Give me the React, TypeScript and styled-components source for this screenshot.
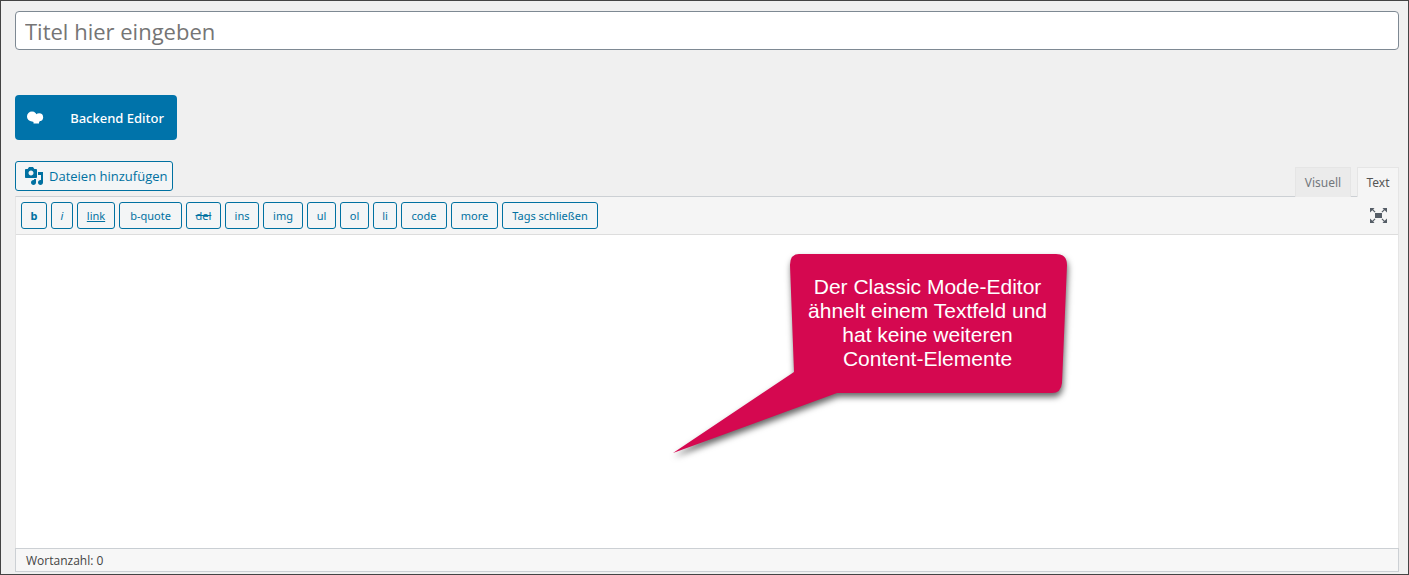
import React from 'react';
import styled, { createGlobalStyle, css } from 'styled-components';

const blue = '#0071a1';

const GlobalStyle = createGlobalStyle`
  *, *::before, *::after { box-sizing: border-box; }
  body {
    margin: 0;
    background: #f0f0f0;
    color: #444;
    font-family: 'Open Sans', 'Noto Sans', sans-serif;
  }
  button, input, textarea { font-family: inherit; margin: 0; }
`;

const Page = styled.main`
  display: flex;
  flex-direction: column;
  min-height: 100vh;
  padding: 10px 9px 2px 14px;
  border: 1px solid #444;
  background: #f0f0f0;
`;

const TitleInput = styled.input`
  width: 100%;
  height: 39px;
  padding: 0 9px;
  border: 1px solid #7e8993;
  border-radius: 4px;
  background: #fff;
  color: #32373c;
  font-size: 22px;
  &::placeholder { color: #757575; opacity: 1; }
`;

const BackendButton = styled.button`
  display: flex;
  align-items: center;
  align-self: flex-start;
  justify-content: space-between;
  width: 162px;
  height: 45px;
  margin-top: 45px;
  padding: 0 13px 0 12px;
  border: 0;
  border-radius: 4px;
  background: #0073aa;
  color: #fff;
  font-family: 'Noto Sans', sans-serif;
  font-size: 13px;
  font-weight: 500;
`;

const EditorTools = styled.div`
  display: flex;
  align-items: flex-end;
  justify-content: space-between;
  margin-top: 21px;
`;

const MediaButton = styled.button`
  display: flex;
  align-items: center;
  gap: 5px;
  width: 158px;
  height: 30px;
  margin-bottom: 5px;
  padding: 0 0 0 8px;
  border: 1px solid ${blue};
  border-radius: 3px;
  background: #f3f5f6;
  color: ${blue};
  font-size: 13px;
  white-space: nowrap;
`;

const Tabs = styled.div`
  display: flex;
  gap: 6px;
  margin-bottom: -1px;
  z-index: 1;
`;

const Tab = styled.button<{ $active?: boolean }>`
  min-width: ${p => (p.$active ? 42 : 56)}px;
  height: 30px;
  padding: 0 7px;
  border: 1px solid #e5e5e5;
  border-bottom: 0;
  background: ${p => (p.$active ? '#f5f5f5' : '#ebebeb')};
  color: ${p => (p.$active ? '#555' : '#72777c')};
  font-family: 'Noto Sans', sans-serif;
  font-size: 12px;
`;

const Editor = styled.section`
  display: flex;
  flex: 1;
  flex-direction: column;
  border: 1px solid #e5e5e5;
  border-top-color: #ccd0d4;
  border-bottom: 0;
`;

const Toolbar = styled.div`
  display: flex;
  align-items: center;
  justify-content: space-between;
  padding: 5px 10px 5px 5px;
  border-bottom: 1px solid #ddd;
  background: #f5f5f5;
`;

const TagButtons = styled.div`
  display: flex;
  flex-wrap: wrap;
  gap: 4px;
`;

type Look = 'bold' | 'italic' | 'link' | 'del';

const looks = {
  bold: css`font-weight: 700;`,
  italic: css`font-style: italic;`,
  link: css`text-decoration: underline;`,
  del: css`text-decoration: line-through;`,
};

const TagButton = styled.button<{ $width: number; $look?: Look }>`
  width: ${p => p.$width}px;
  height: 27px;
  padding: 0;
  border: 1px solid ${blue};
  border-radius: 3px;
  background: #f3f5f6;
  color: ${blue};
  font-family: 'Noto Sans', sans-serif;
  font-size: 11px;
  white-space: nowrap;
  ${p => p.$look && looks[p.$look]}
`;

const IconButton = styled.button`
  display: flex;
  padding: 0;
  border: 0;
  background: none;
  color: #555d66;
`;

const Canvas = styled.div`
  position: relative;
  display: flex;
  flex: 1;
  min-height: 230px;
`;

const TextArea = styled.textarea`
  flex: 1;
  padding: 10px;
  border: 0;
  outline: 0;
  resize: none;
  background: #fff;
  font-size: 13px;
`;

const Callout = styled.aside`
  position: absolute;
  top: 14px;
  left: calc(47% - 1px);
  width: 410px;
  height: 215px;
  pointer-events: none;
`;

const CalloutShape = styled.svg`
  position: absolute;
  inset: 0;
  overflow: visible;
  filter: drop-shadow(1px 4px 3px rgba(0, 0, 0, 0.6));
`;

const CalloutText = styled.p`
  position: relative;
  width: 276px;
  margin: 0 0 0 125px;
  padding-top: 26px;
  color: #fff;
  font: 21px/24px 'Liberation Sans', Arial, sans-serif;
  text-align: center;
`;

const StatusBar = styled.footer`
  height: 24px;
  padding: 0 10px;
  border: 1px solid #ccd0d4;
  background: #f7f7f7;
  color: #444;
  font-size: 12px;
  line-height: 24px;
`;

const tags: { label: string; width: number; look?: Look }[] = [
  { label: 'b', width: 26, look: 'bold' },
  { label: 'i', width: 22, look: 'italic' },
  { label: 'link', width: 38, look: 'link' },
  { label: 'b-quote', width: 63 },
  { label: 'del', width: 35, look: 'del' },
  { label: 'ins', width: 34 },
  { label: 'img', width: 40 },
  { label: 'ul', width: 29 },
  { label: 'ol', width: 29 },
  { label: 'li', width: 24 },
  { label: 'code', width: 46 },
  { label: 'more', width: 47 },
  { label: 'Tags schließen', width: 96 },
];

const CloudIcon = () => (
  <svg width="17" height="14" viewBox="0 0 17 14" fill="#fff" aria-hidden="true">
    <circle cx="5" cy="5.500" r="5" />
    <circle cx="12.2" cy="6.200" r="3.9" />
    <path d="M4 8h10l-2 3.500V12.500H6.500V11L3 9z" />
  </svg>
);

const MediaIcon = () => (
  <svg width="20" height="20" viewBox="0 0 20 20" fill="currentColor" aria-hidden="true">
    <path d="M13 11V4c0-.55-.45-1-1-1h-1.670L9 1H5L3.670 3H2c-.55 0-1 .45-1 1v7c0 .55.45 1 1 1h10c.55 0 1-.45 1-1zM7 4.500c1.380 0 2.500 1.120 2.500 2.500S8.380 9.500 7 9.500 4.500 8.380 4.500 7 5.620 4.500 7 4.500zM14 6h5v10.500c0 1.380-1.120 2.500-2.500 2.500S14 17.880 14 16.500s1.120-2.500 2.500-2.500c.17 0 .34.02.5.05V9h-3V6zm-4 8.050V13h2v3.500c0 1.380-1.120 2.500-2.500 2.500S7 17.880 7 16.500 8.120 14 9.500 14c.17 0 .34.02.5.05z" />
  </svg>
);

const FullscreenIcon = () => (
  <svg width="20" height="20" viewBox="0 0 20 20" fill="currentColor" aria-hidden="true">
    <path d="M7 7h7v5H7z" />
    <path d="M2 2h4.500L5.200 3.500l2.300 2.300-.8.8-2.400-2.300L2 6.500zM19 2v4.500l-2.300-2.200-2.400 2.300-.8-.8 2.300-2.300L14.500 2zM2 17v-4.500l2.300 2.200 2.400-2.300.8.8-2.300 2.300L6.500 17zM19 17h-4.500l1.300-1.500-2.300-2.300.8-.8 2.400 2.300L19 12.500z" />
  </svg>
);

export default function App() {
  return (
    <>
      <GlobalStyle />
      <Page>
        <TitleInput type="text" placeholder="Titel hier eingeben" aria-label="Titel hier eingeben" />
        <BackendButton type="button">
          <CloudIcon />
          Backend Editor
        </BackendButton>
        <EditorTools>
          <MediaButton type="button">
            <MediaIcon />
            Dateien hinzufügen
          </MediaButton>
          <Tabs role="tablist">
            <Tab type="button" role="tab" aria-selected={false}>Visuell</Tab>
            <Tab type="button" role="tab" aria-selected $active>Text</Tab>
          </Tabs>
        </EditorTools>
        <Editor>
          <Toolbar>
            <TagButtons>
              {tags.map(t => (
                <TagButton key={t.label} type="button" $width={t.width} $look={t.look}>
                  {t.label}
                </TagButton>
              ))}
            </TagButtons>
            <IconButton type="button" aria-label="Vollbild">
              <FullscreenIcon />
            </IconButton>
          </Toolbar>
          <Canvas>
            <TextArea aria-label="Inhalt" />
            <Callout>
              <CalloutShape width="410" height="215" viewBox="0 0 410 215" aria-hidden="true">
                <path
                  fill="#d50850"
                  d="M134 5H391Q402 5 402 16L397 134Q396 144 387 144H172L8 204L129 123L125 16Q125 5 134 5Z"
                />
              </CalloutShape>
              <CalloutText>
                Der Classic Mode-Editor
                <br />
                ähnelt einem Textfeld und
                <br />
                hat keine weiteren
                <br />
                Content-Elemente
              </CalloutText>
            </Callout>
          </Canvas>
        </Editor>
        <StatusBar>Wortanzahl: 0</StatusBar>
      </Page>
    </>
  );
}
